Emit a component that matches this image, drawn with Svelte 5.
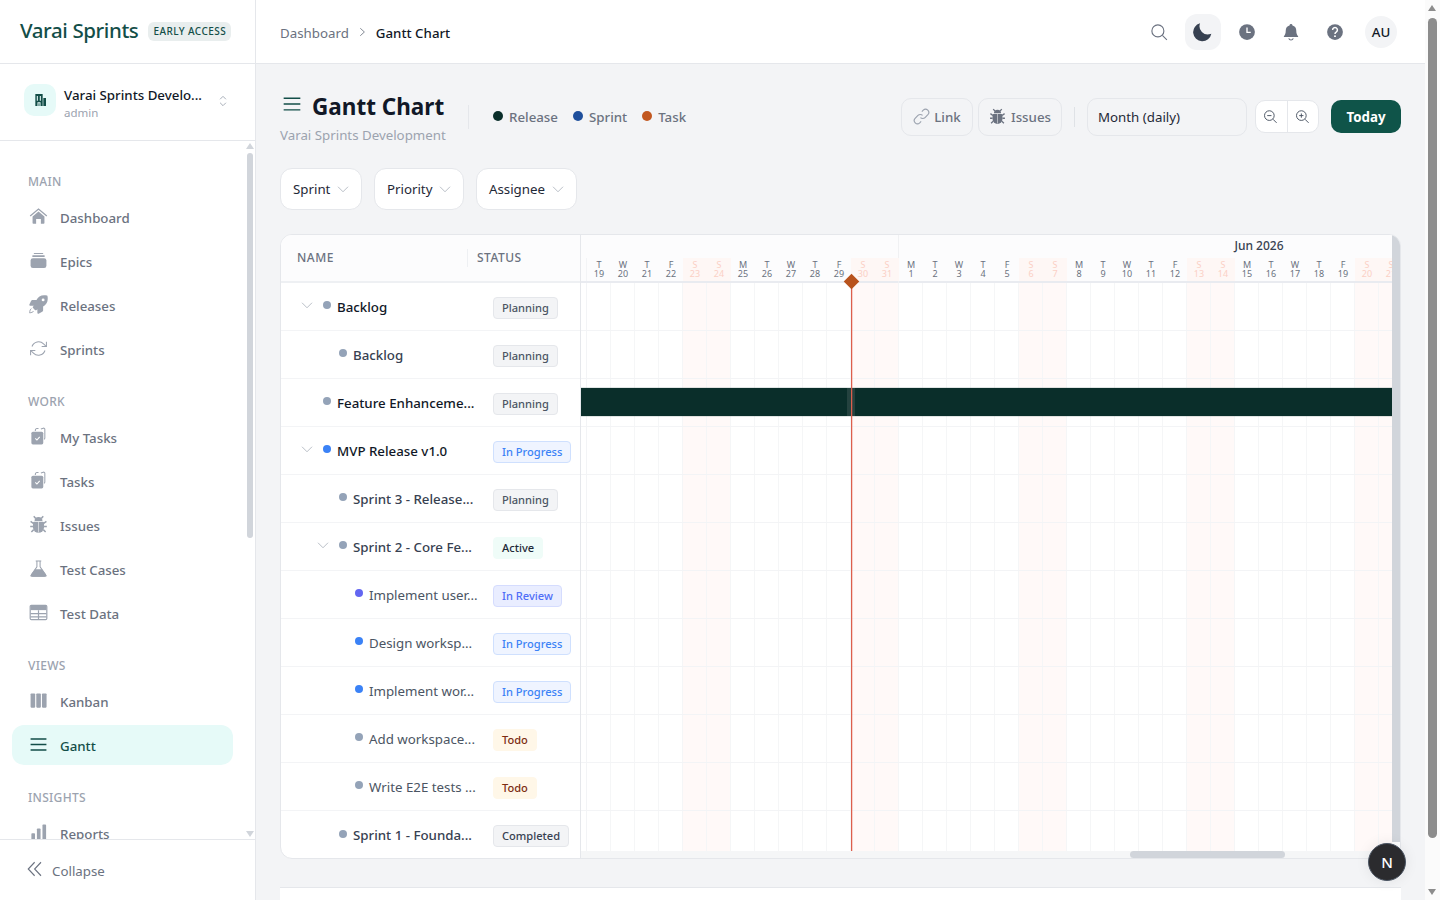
<script>
  const icons = {
    home: '<path d="M1.500 11.500 12 2.500l10.500 9" fill="none" stroke="currentColor" stroke-width="1.600"/><path d="M4.500 12 12 5.600l7.500 6.400v8.200a1 1 0 0 1-1 1H15v-6H9v6H5.500a1 1 0 0 1-1-1z"/>',
    epics: '<rect x="6" y="2.500" width="12" height="1.400" rx=".7"/><rect x="4" y="5.500" width="16" height="2" rx="1"/><rect x="2" y="9" width="20" height="12.500" rx="3"/>',
    rocket: '<g transform="scale(.0455) translate(8 8)"><path d="M505.120 19.090c-1.190-5.530-6.660-11-12.210-12.190C460.720 0 435.510 0 410.410 0 307.180 0 245.270 55.200 199.050 128H94.840c-16.350.02-35.560 11.880-42.890 26.480L2.520 253.300A28.400 28.400 0 0 0 0 264a24 24 0 0 0 24 24h103.820l-22.480 22.470c-11.360 11.360-13 32.260 0 45.250l50.910 50.910c11.160 11.190 32.160 13.160 45.280 0l22.470-22.470V488a24 24 0 0 0 24 24 28.560 28.560 0 0 0 10.710-2.520l98.730-49.390c14.630-7.300 26.510-26.500 26.510-42.860V312.800c72.600-46.310 128.030-108.410 128.030-211.100.0-25.200.0-50.400-6.950-82.610zM384.040 168a40 40 0 1 1 40.010-40 40 40 0 0 1-40.010 40z"/><path d="M60 370c-30 10-46 50-50 118 50-6 96-22 112-50" fill="none" stroke="currentColor" stroke-width="26"/></g>',
    sync: '<g fill="none" stroke="currentColor" stroke-width="1.300"><path d="M22 3.500v6h-6M2 20.500v-6h6"/><path d="M3.800 9.500a8.800 8.800 0 0 1 14.600-3.300L22 9.500M2 14.500l3.600 3.300a8.800 8.800 0 0 0 14.600-3.300"/></g>',
    tasks: '<path d="M8 5V4a2 2 0 0 1 2-2h2M15 2.500 18 1.500a1.500 1.500 0 0 1 2 1.400V14a2 2 0 0 1-1 1.700" fill="none" stroke="currentColor" stroke-width="1.300"/><path d="M5 6h11a2 2 0 0 1 2 2v12a2 2 0 0 1-2 2H5a2 2 0 0 1-2-2V8a2 2 0 0 1 2-2z"/><path d="m8 14.500 2 2 3.500-4" fill="none" stroke="#fff" stroke-width="1.400"/>',
    bug: '<path d="M7 7.500a5 5 0 0 1 10 0z"/><path d="M6.500 8.500h11a1.500 1.500 0 0 1 1.500 1.500v5.500a7 7 0 0 1-14 0V10a1.500 1.500 0 0 1 1.500-1.500z"/><path d="M8.500 4.500 6 1.500M15.500 4.500 18 1.500M5.500 10.500 2 8M18.500 10.500 22 8M5 14.500H1.500M19 14.500h3.500M6 18.500l-3 3M18 18.500l3 3" fill="none" stroke="currentColor" stroke-width="1.900"/><path d="M12 8.500V22" stroke="#fff" stroke-width=".7"/>',
    flask: '<path d="M8.500 2.500h7M10 2.500V10L3.200 19.500a1.500 1.500 0 0 0 1.300 2.200h15a1.500 1.500 0 0 0 1.300-2.200L14 10V2.500" fill="none" stroke="currentColor" stroke-width="1.300"/><path d="M7.500 13h9l5.500 7.500a1.200 1.200 0 0 1-1 1.800H3a1.200 1.200 0 0 1-1-1.800z"/>',
    table: '<path d="M3 3h18a1.500 1.500 0 0 1 1.500 1.500v15A1.500 1.500 0 0 1 21 21H3a1.500 1.500 0 0 1-1.500-1.500v-15A1.500 1.500 0 0 1 3 3z" fill="none" stroke="currentColor" stroke-width="1.500"/><path d="M2 3.500h20V9H2z"/><path d="M2 13.500h20M2 17.500h20M12 9v12" stroke="currentColor" stroke-width="1.500"/>',
    kanban: '<rect x="2" y="3" width="5.800" height="18" rx="1"/><rect x="9.200" y="3" width="5.800" height="18" rx="1"/><rect x="16.400" y="3" width="5.800" height="18" rx="1"/>',
    menu: '<path d="M2 5h20M2 12h20M2 19h20" fill="none" stroke="currentColor" stroke-width="1.700"/>',
    reports: '<rect x="3" y="13" width="4.600" height="9" rx="1"/><rect x="10" y="7" width="4.600" height="15" rx="1"/><rect x="17" y="2" width="4.600" height="20" rx="1"/>',
    collapse: '<path d="M11.500 3 3 12l8.500 9M20 3l-8.500 9 8.500 9" fill="none" stroke="currentColor" stroke-width="1.500"/>',
    building: '<path d="M5 3h11v18H5zM17 9h4v12h-4z"/><path d="M8 6v7M12.500 6v7M9 21v-5h3v5" stroke="#e6faf8" stroke-width="1.600" fill="none"/>',
    updown: '<path d="m7 9 5-5 5 5M7 15l5 5 5-5" fill="none" stroke="currentColor" stroke-width="1.500"/>',
    chevron: '<path d="m2 7.500 10 10 10-10" fill="none" stroke="currentColor" stroke-width="1.400"/>',
    right: '<path d="m6 2 11 10L6 22" fill="none" stroke="currentColor" stroke-width="2.200"/>',
    search: '<circle cx="10.500" cy="10.500" r="8" fill="none" stroke="currentColor" stroke-width="1.500"/><path d="m16.500 16.500 6 6" stroke="currentColor" stroke-width="1.500"/>',
    moon: '<path d="M21 14.500A10 10 0 0 1 8.500 1.500 11 11 0 1 0 22 14.200z"/>',
    clock: '<circle cx="12" cy="12" r="10.500"/><path d="M12 6v6.500h5" fill="none" stroke="#fff" stroke-width="1.800"/>',
    bell: '<path d="M12 1.500a2 2 0 0 1 2 1.800 7 7 0 0 1 5 6.700c0 4 1 6 2.500 7.500v1H2.500v-1C4 16 5 14 5 10a7 7 0 0 1 5-6.700 2 2 0 0 1 2-1.800z"/><path d="M9 20.500a3.200 3.200 0 0 0 6 0" fill="none" stroke="currentColor" stroke-width="1.500"/>',
    help: '<circle cx="12" cy="12" r="10.500"/><path d="M8.800 9.300a3.200 3.200 0 1 1 4.800 2.800c-1 .6-1.600 1.200-1.600 2.400" fill="none" stroke="#fff" stroke-width="2"/><circle cx="12" cy="17.500" r="1.300" fill="#fff"/>',
    link: '<g fill="none" stroke="currentColor" stroke-width="1.600"><path d="M10.500 13.500a4.500 4.500 0 0 0 6.500 0l4-4a4.600 4.600 0 0 0-6.500-6.500l-2 2"/><path d="M13.500 10.500a4.500 4.500 0 0 0-6.500 0l-4 4a4.600 4.600 0 0 0 6.500 6.500l2-2"/></g>',
    zoomout: '<g fill="none" stroke="currentColor" stroke-width="1.600"><circle cx="10.500" cy="10.500" r="8"/><path d="m16.500 16.500 6 6M7 10.500h7"/></g>',
    zoomin: '<g fill="none" stroke="currentColor" stroke-width="1.600"><circle cx="10.500" cy="10.500" r="8"/><path d="m16.500 16.500 6 6M7 10.500h7M10.500 7v7"/></g>'
  };

  const nav = [
    { title: 'Main', items: [['home', 'Dashboard'], ['epics', 'Epics'], ['rocket', 'Releases'], ['sync', 'Sprints']] },
    { title: 'Work', items: [['tasks', 'My Tasks'], ['tasks', 'Tasks'], ['bug', 'Issues'], ['flask', 'Test Cases'], ['table', 'Test Data']] },
    { title: 'Views', items: [['kanban', 'Kanban'], ['menu', 'Gantt']] },
    { title: 'Insights', items: [['reports', 'Reports']] }
  ];

  const rows = [
    { name: 'Backlog', level: 0, kids: true, kind: 'grey', weight: 'strong', status: 'Planning' },
    { name: 'Backlog', level: 1, kind: 'grey', weight: 'mid', status: 'Planning' },
    { name: 'Feature Enhanceme...', level: 0, kind: 'grey', weight: 'strong', status: 'Planning', bar: true },
    { name: 'MVP Release v1.0', level: 0, kids: true, kind: 'blue', weight: 'strong', status: 'In Progress' },
    { name: 'Sprint 3 - Release...', level: 1, kind: 'grey', weight: 'mid', status: 'Planning' },
    { name: 'Sprint 2 - Core Fe...', level: 1, kids: true, kind: 'grey', weight: 'mid', status: 'Active' },
    { name: 'Implement user...', level: 2, kind: 'indigo', weight: 'reg', status: 'In Review' },
    { name: 'Design worksp...', level: 2, kind: 'blue', weight: 'reg', status: 'In Progress' },
    { name: 'Implement wor...', level: 2, kind: 'blue', weight: 'reg', status: 'In Progress' },
    { name: 'Add workspace...', level: 2, kind: 'grey', weight: 'reg', status: 'Todo' },
    { name: 'Write E2E tests ...', level: 2, kind: 'grey', weight: 'reg', status: 'Todo' },
    { name: 'Sprint 1 - Founda...', level: 1, kind: 'grey', weight: 'mid', status: 'Completed' }
  ];

  const letters = ['S', 'M', 'T', 'W', 'T', 'F', 'S'];
  const days = [];
  for (let i = 0; i < 34; i++) {
    const d = new Date(2026, 4, 19 + i, 12);
    days.push({ l: letters[d.getDay()], n: d.getDate(), off: d.getDay() === 0 || d.getDay() === 6 });
  }
  const statusClass = (s) => s.toLowerCase().replace(' ', '-');
</script>

{#snippet icon(name, cls = '')}
  <svg class="ic {cls}" viewBox="0 0 24 24" fill="currentColor" aria-hidden="true">{@html icons[name]}</svg>
{/snippet}

<div class="app">
  <aside class="sidebar">
    <div class="brand">
      <span class="logo">Varai Sprints</span>
      <span class="early">EARLY ACCESS</span>
    </div>
    <div class="workspace">
      <span class="ws-icon">{@render icon('building')}</span>
      <span class="ws-text">
        <span class="ws-name">Varai Sprints Develo...</span>
        <span class="ws-role">admin</span>
      </span>
      <span class="ws-switch">{@render icon('updown')}</span>
    </div>
    <nav class="nav">
      {#each nav as section}
        <div class="section">
          <div class="section-title">{section.title}</div>
          {#each section.items as [ic, label]}
            <div class="nav-item" class:active={label === 'Gantt'}>
              <span class="nav-ic">{@render icon(ic)}</span>
              <span>{label}</span>
            </div>
          {/each}
        </div>
      {/each}
      <div class="side-bar-track">
        <i class="tri up"></i><i class="thumb"></i><i class="tri down"></i>
      </div>
    </nav>
    <div class="collapse">
      <span class="collapse-ic">{@render icon('collapse')}</span>
      <span>Collapse</span>
    </div>
  </aside>

  <div class="main">
    <header class="topbar">
      <div class="crumbs">
        <span class="crumb">Dashboard</span>
        <span class="crumb-sep">{@render icon('right')}</span>
        <span class="crumb-now">Gantt Chart</span>
      </div>
      <div class="top-actions">
        <span class="top-btn search">{@render icon('search')}</span>
        <span class="top-btn moon">{@render icon('moon')}</span>
        <span class="top-btn">{@render icon('clock')}</span>
        <span class="top-btn">{@render icon('bell')}</span>
        <span class="top-btn">{@render icon('help')}</span>
        <span class="avatar">AU</span>
      </div>
    </header>

    <main class="content">
      <div class="page-head">
        <div class="head-left">
          <div class="title-block">
            <div class="title-row">
              <span class="title-ic">{@render icon('menu')}</span>
              <h1>Gantt Chart</h1>
            </div>
            <div class="subtitle">Varai Sprints Development</div>
          </div>
          <div class="legend">
            <span class="leg"><i class="leg-dot release"></i>Release</span>
            <span class="leg"><i class="leg-dot sprint"></i>Sprint</span>
            <span class="leg"><i class="leg-dot task"></i>Task</span>
          </div>
        </div>
        <div class="head-right">
          <button class="ghost link">{@render icon('link')}Link</button>
          <button class="ghost issues">{@render icon('bug')}Issues</button>
          <span class="vr"></span>
          <div class="scale">Month (daily)</div>
          <div class="zoomers">
            <span>{@render icon('zoomout')}</span>
            <span>{@render icon('zoomin')}</span>
          </div>
          <button class="today">Today</button>
        </div>
      </div>

      <div class="filters">
        {#each ['Sprint', 'Priority', 'Assignee'] as f}
          <button class="filter">{f}{@render icon('chevron')}</button>
        {/each}
      </div>

      <section class="card">
        <div class="left">
          <div class="left-head">
            <span class="col-name">NAME</span>
            <span class="col-status">STATUS</span>
          </div>
          {#each rows as r}
            <div class="row">
              <div class="name-cell lvl{r.level}">
                <span class="caret">{#if r.kids}{@render icon('chevron')}{/if}</span>
                <i class="dot {r.kind}"></i>
                <span class="name {r.weight}">{r.name}</span>
              </div>
              <div class="status-cell"><span class="tag {statusClass(r.status)}">{r.status}</span></div>
            </div>
          {/each}
        </div>

        <div class="right">
          <div class="timeline">
            <div class="months">
              <div class="month may"></div>
              <div class="month jun">Jun 2026</div>
            </div>
            <div class="day-row">
              <span class="spacer"></span>
              {#each days as d}
                <span class="day" class:off={d.off}><b>{d.l}</b><b>{d.n}</b></span>
              {/each}
            </div>
            <div class="t-body">
              {#each rows as r}
                <div class="t-row">
                  <span class="spacer"></span>
                  {#each days as d}
                    <span class="t-cell" class:off={d.off}></span>
                  {/each}
                  {#if r.bar}<div class="bar"><i></i></div>{/if}
                </div>
              {/each}
            </div>
            <div class="today-line"></div>
            <div class="today-mark"></div>
          </div>
          <div class="v-scroll"></div>
          <div class="h-scroll"><i></i></div>
        </div>
      </section>

      <div class="next-panel"></div>
    </main>
    <div class="n-badge">N</div>
  </div>

  <div class="page-scroll">
    <i class="tri up"></i><i class="thumb"></i><i class="tri down"></i>
  </div>
</div>

<style>
  :global(body) { margin: 0; background: #fff; overflow: hidden; }
  .app {
    display: flex; width: 1440px; height: 900px; overflow: hidden;
    font-family: "Noto Sans", "Open Sans", sans-serif; color: #111827; font-size: 13.3px;
  }
  .ic { display: block; width: 100%; height: 100%; }
  button { font: inherit; cursor: pointer; }

  .sidebar {
    width: 256px; flex: none; box-sizing: border-box; border-right: 1px solid #e5e7eb;
    display: flex; flex-direction: column; background: #fff;
  }
  .brand {
    height: 64px; flex: none; box-sizing: border-box; border-bottom: 1px solid #e5e7eb;
    display: flex; align-items: center; padding: 0 0 4px 20px; gap: 10px;
  }
  .logo { font-size: 20.500px; font-weight: 500; color: #134e48; letter-spacing: -.4px; white-space: nowrap; }
  .early {
    background: #e9eeee; color: #134e48; font-size: 10px; font-weight: 500; letter-spacing: .45px;
    height: 19px; line-height: 19px; padding: 0 5px; border-radius: 6px; white-space: nowrap; margin-top: 3px;
  }
  .workspace {
    height: 77px; flex: none; box-sizing: border-box; border-bottom: 1px solid #e5e7eb;
    display: flex; align-items: center; padding: 0 24px; gap: 8px;
  }
  .ws-icon { width: 32px; height: 32px; box-sizing: border-box; padding: 8px; background: #e6faf8; border-radius: 10px; color: #134e48; flex: none; margin-top: -4px; }
  .ws-text { display: flex; flex-direction: column; flex: 1; min-width: 0; margin-top: 1px; }
  .ws-name { font-weight: 500; line-height: 20px; white-space: nowrap; }
  .ws-role { font-size: 11.500px; line-height: 16px; color: #9ca3af; }
  .ws-switch { width: 14px; height: 16px; color: #9ca3af; flex: none; margin-right: 1px; margin-top: -2px; }

  .nav { flex: 1; min-height: 0; overflow: hidden; position: relative; padding: 33px 22px 0 12px; box-sizing: border-box; }
  .section { margin-bottom: 25px; }
  .section-title { font-size: 12px; font-weight: 500; line-height: 16px; letter-spacing: .3px; text-transform: uppercase; color: #9ca3af; padding-left: 16px; margin-bottom: 7px; }
  .nav-item {
    height: 40px; box-sizing: border-box; padding-top: 2px; margin-bottom: 4px; border-radius: 12px; display: flex; align-items: center;
    gap: 12px; padding-left: 17px; font-weight: 500; color: #6b7280;
  }
  .nav-ic { width: 19px; height: 19px; color: #9ca3af; flex: none; margin-top: -4px; }
  .nav-item.active { background: #e6faf8; color: #134e48; font-weight: 500; }
  .nav-item.active .nav-ic { color: #134e48; }
  .side-bar-track { position: absolute; right: 2px; top: 0; bottom: 0; width: 6px; }
  .side-bar-track .thumb { position: absolute; left: 0; right: 0; top: 12px; height: 385px; background: #d1d5db; border-radius: 3px; }
  .tri { position: absolute; width: 0; height: 0; border-left: 4px solid transparent; border-right: 4px solid transparent; }
  .tri.up { border-bottom: 6px solid #d1d5db; }
  .tri.down { border-top: 6px solid #d1d5db; }
  .side-bar-track .tri { left: -1px; }
  .side-bar-track .tri.up { top: 2px; }
  .side-bar-track .tri.down { bottom: 2px; }
  .collapse {
    height: 61px; flex: none; box-sizing: border-box; border-top: 1px solid #e5e7eb; background: #fff; position: relative; padding-top: 2px;
    display: flex; align-items: center; gap: 8px; padding-left: 26px; color: #6b7280;
  }
  .collapse-ic { width: 18px; height: 18px; color: #6b7280; margin-top: -4px; }

  .main { width: 1169px; flex: none; display: flex; flex-direction: column; position: relative; background: #f3f4f6; }
  .topbar {
    height: 64px; flex: none; box-sizing: border-box; background: #fff; border-bottom: 1px solid #e5e7eb;
    display: flex; align-items: center; justify-content: space-between; padding: 0 28px 0 24px;
  }
  .crumbs { display: flex; align-items: center; padding-top: 3px; }
  .crumb { color: #6b7280; }
  .crumb-sep { width: 9px; height: 12px; color: #6b7280; margin: 0 9px 2px 9px; }
  .crumb-now { font-weight: 500; }
  .top-actions { display: flex; align-items: center; gap: 8px; }
  .top-btn { width: 36px; height: 36px; box-sizing: border-box; padding: 9px; border-radius: 12px; color: #6b7280; }
  .top-btn.moon { background: #f3f4f6; color: #374151; padding: 8px; }
  .top-btn.search { color: #6b7280; }
  .avatar { width: 32px; height: 32px; border-radius: 50%; background: #f3f4f6; display: flex; align-items: center; justify-content: center; font-weight: 500; margin-left: 4px; }

  .content { flex: 1; min-height: 0; overflow: hidden; padding: 24px 24px 0; }
  .page-head { display: flex; justify-content: space-between; align-items: center; height: 57px; }
  .head-left { display: flex; align-items: center; }
  .title-block { width: 164px; padding-right: 24px; }
  .title-row { display: flex; align-items: center; gap: 8px; height: 36px; }
  .title-ic { width: 24px; height: 24px; color: #134e48; flex: none; box-sizing: border-box; padding: 2px 0; margin-top: -4px; }
  h1 { margin: 1px 0 0; font-size: 22.500px; font-weight: 700; line-height: 36px; white-space: nowrap; }
  .subtitle { color: #9ca3af; line-height: 20px; margin-top: 1px; white-space: nowrap; }
  .legend { display: flex; gap: 15px; border-left: 1px solid #e5e7eb; padding-left: 24px; height: 24px; align-items: center; }
  .leg { display: flex; align-items: center; gap: 6px; font-weight: 500; color: #6b7280; white-space: nowrap; }
  .leg-dot { width: 10px; height: 10px; border-radius: 50%; margin-top: -2px; }
  .leg-dot.release { background: #0a2e2a; }
  .leg-dot.sprint { background: #1e4f9c; }
  .leg-dot.task { background: #c2571f; }
  .head-right { display: flex; align-items: center; }
  .ghost {
    height: 38px; box-sizing: border-box; background: transparent; border: 1px solid #e5e7eb; border-radius: 10px;
    display: flex; align-items: center; justify-content: center; gap: 4px; color: #6b7280; font-weight: 500; padding: 0;
  }
  .ghost :global(.ic) { width: 17px; height: 17px; color: #9ca3af; }
  .ghost.issues :global(.ic) { color: #6b7280; }
  .link { width: 72px; margin-right: 5px; }
  .issues { width: 84px; gap: 5px; }
  .vr { width: 1px; height: 20px; background: #dfe2e6; margin: 0 12px 0 12px; }
  .scale {
    width: 160px; height: 38px; box-sizing: border-box; border: 1px solid #e5e7eb; border-radius: 10px;
    display: flex; align-items: center; padding-left: 10px; color: #1f2937;
  }
  .zoomers { display: flex; width: 64px; height: 33px; box-sizing: border-box; background: #fff; border: 1px solid #e5e7eb; border-radius: 10px; margin: 0 12px 0 8px; }
  .zoomers span { flex: 1; box-sizing: border-box; padding: 8px 9px 8px 7px; color: #4b5563; }
  .zoomers span + span { border-left: 1px solid #e5e7eb; }
  .today { width: 70px; height: 33px; border: 0; border-radius: 10px; background: #0f5449; color: #fff; font-weight: 700; padding: 0; }

  .filters { display: flex; gap: 12px; margin-top: 23px; }
  .filter {
    height: 42px; box-sizing: border-box; background: #fff; border: 1px solid #e5e7eb; border-radius: 12px;
    display: flex; align-items: center; gap: 6.500px; padding: 0 12px; color: #1f2937;
  }
  .filter :global(.ic) { width: 12px; height: 12px; color: #9ca3af; }

  .card { margin-top: 24px; height: 625px; box-sizing: border-box; background: #fff; border: 1px solid #e5e7eb; border-radius: 12px; display: flex; overflow: hidden; }
  .left { width: 300px; flex: none; box-sizing: border-box; border-right: 1px solid #e5e7eb; }
  .left-head {
    height: 48px; box-sizing: border-box; background: #fcfcfd; border-bottom: 2px solid #eef0f3; display: flex; align-items: center;
    font-size: 12px; font-weight: 500; letter-spacing: .5px; color: #6b7280;
  }
  .col-name { width: 187px; box-sizing: border-box; padding-left: 16px; border-right: 1px solid #eef0f3; line-height: 18px; margin-right: 9px; }
  .col-status { margin-top: -1px; }
  .row { height: 48px; box-sizing: border-box; border-bottom: 1px solid #f3f4f6; display: flex; align-items: center; }
  .row:last-child { border-bottom: 0; }
  .name-cell { width: 212px; flex: none; box-sizing: border-box; display: flex; align-items: center; overflow: hidden; padding-left: 18px; }
  .lvl1 { padding-left: 34px; }
  .lvl2 { padding-left: 50px; }
  .caret { width: 16px; height: 12px; color: #9ca3af; flex: none; box-sizing: border-box; margin-right: 8px; margin-top: -3px; padding: 0 2px; }
  .dot { width: 8px; height: 8px; border-radius: 50%; flex: none; margin-right: 6px; margin-top: -3px; }
  .dot.grey { background: #94a3b8; }
  .dot.blue { background: #3b82f6; }
  .dot.indigo { background: #6366f1; }
  .name { white-space: nowrap; line-height: 20px; }
  .name.strong { font-weight: 500; color: #111827; }
  .name.mid { font-weight: 500; color: #374151; }
  .name.reg { color: #4b5563; }
  .status-cell { flex: 1; }
  .tag {
    display: inline-block; height: 22px; line-height: 20px; box-sizing: border-box; padding: 0 8px; border-radius: 4px; position: relative; top: 1px;
    border: 1px solid #e5e7eb; background: #f3f4f6; color: #4b5563; font-size: 11.100px; font-weight: 500; white-space: nowrap;
  }
  .tag.in-progress { background: #eff4ff; border-color: #cfe0fe; color: #3b82f6; }
  .tag.in-review { background: #e9edff; border-color: #d5dcfe; color: #4f6ef7; }
  .tag.active { background: #effcf8; border-color: #effcf8; color: #1f2937; }
  .tag.todo { background: #fff7e8; border-color: #fff7e8; color: #7c2d12; }
  .tag.completed { color: #374151; }

  .right { flex: 1; min-width: 0; position: relative; display: flex; flex-wrap: wrap; align-content: flex-start; }
  .timeline { width: 811px; height: 617px; overflow: hidden; position: relative; }
  .months { height: 23px; display: flex; background: #fcfcfd; width: 1100px; }
  .month { box-sizing: border-box; height: 22px; line-height: 22px; font-size: 12px; font-weight: 500; color: #374151; text-align: center; }
  .month.may { width: 318px; border-right: 1px solid #f0f1f3; height: 48px; }
  .month.jun { width: 720px; }
  .day-row { height: 25px; box-sizing: border-box; border-bottom: 2px solid #e9ebf0; display: flex; width: 1100px; background: #fcfcfd; }
  .spacer { width: 6px; flex: none; box-sizing: border-box; border-right: 1px solid #f3f4f6; }
  .day { width: 24px; flex: none; height: 23px; box-sizing: border-box; display: flex; flex-direction: column; align-items: center; justify-content: center; padding-bottom: 2px; color: #6b7280; }
  .day b { font-size: 9px; line-height: 9px; font-weight: 400; }
  .day.off { background: #fef7f5; color: #fbd0c5; }
  .t-body { width: 1100px; }
  .t-row { height: 48px; box-sizing: border-box; border-bottom: 1px solid #f3f4f6; display: flex; position: relative; }
  .t-cell { width: 24px; flex: none; box-sizing: border-box; border-right: 1px solid #f5f6f7; }
  .t-cell.off { background: #fff9f8; }
  .bar { position: absolute; left: 0; top: 9px; width: 811px; height: 28px; background: #0a2e2a; box-shadow: 0 0 1px #4b6360; }
  .bar i { position: absolute; left: 266px; top: 0; bottom: 0; width: 8px; background: #24423f; }
  .today-line { position: absolute; left: 270px; top: 47px; bottom: 0; width: 2px; background: linear-gradient(90deg, #dc5f4d 50%, rgba(226, 88, 70, .25) 50%); }
  .today-mark { position: absolute; left: 265px; top: 41px; width: 11px; height: 11px; background: #b8531d; transform: rotate(45deg); }
  .v-scroll { position: absolute; right: 0; top: 0; width: 8px; height: 607px; background: #d1d5db; }
  .h-scroll { position: absolute; left: 0; right: 0; bottom: 0; height: 7px; background: #f5f6f7; }
  .h-scroll i { position: absolute; left: 549px; width: 155px; top: 0; height: 7px; border-radius: 4px; background: #d1d5db; }

  .next-panel { margin-top: 28px; height: 40px; background: #fff; border-top: 1px solid #e5e7eb; }
  .n-badge {
    position: absolute; left: 1112px; top: 843px; width: 38px; height: 38px; box-sizing: border-box; border-radius: 50%;
    background: #2b2b2e; border: 1px solid #4b5563; color: #fff; font-size: 15px; font-weight: 500;
    display: flex; align-items: center; justify-content: center; box-shadow: 0 0 14px rgba(0, 0, 0, .08);
  }

  .page-scroll { width: 15px; flex: none; position: relative; background: #fbfbfb; }
  .page-scroll .thumb { position: absolute; left: 3px; width: 9px; top: 18px; height: 820px; background: #8c8c8c; border-radius: 5px; }
  .page-scroll .tri { left: 3px; border-left-width: 4.500px; border-right-width: 4.500px; }
  .page-scroll .tri.up { top: 5px; border-bottom-color: #8c8c8c; }
  .page-scroll .tri.down { bottom: 5px; border-top-color: #8c8c8c; }
</style>
